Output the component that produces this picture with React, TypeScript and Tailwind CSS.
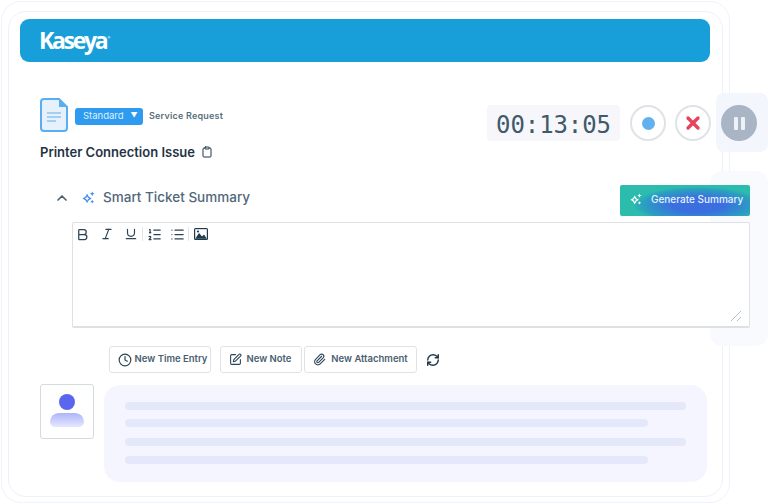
import { Bold, ChevronUp, Clipboard, Clock, Italic, List, ListOrdered, Paperclip, RefreshCw, SquarePen, Underline, X } from "lucide-react";

function Sparkle({ className }: { className: string }) {
  return (
    <svg viewBox="0 0 14 14" className={className} fill="currentColor">
      <path d="M5.5 3 7.4 6.1 10.500 8 7.400 9.900 5.500 13 3.600 9.900 0.500 8 3.600 6.100ZM5.500 5.600 4.700 7.200 3.100 8 4.700 8.800 5.500 10.400 6.300 8.800 7.900 8 6.300 7.200Z" fillRule="evenodd" />
      <path d="M11 .5 11.800 2.200 13.500 3 11.800 3.800 11 5.500 10.200 3.800 8.500 3 10.200 2.200Z" />
      <path d="M11 9.500 11.700 10.800 13 11.500 11.700 12.200 11 13.500 10.300 12.200 9 11.500 10.300 10.800Z" />
    </svg>
  );
}

function ActionButton({ icon, label, w }: { icon: React.ReactNode; label: string; w: string }) {
  return (
    <button className={`flex h-[27px] items-center justify-center gap-[3px] rounded-[3px] border border-[#dfe3e8] bg-white text-[9.5px] font-semibold text-[#4a6070] ${w}`}>
      {icon}
      {label}
    </button>
  );
}

export default function App() {
  return (
    <div className="relative h-[504px] w-[768px] overflow-hidden bg-white font-['Inter',sans-serif]">
      <div className="absolute left-[716px] top-[93px] z-[1] h-[59px] w-[52px] rounded-[8px] bg-[#f4f6fd]" />
      <div className="absolute left-[710px] top-[171px] z-[1] h-[175px] w-[58px] rounded-[12px] bg-[#f9fafd]" />

      <div className="ml-[1px] mt-[1px] h-[502px] w-[729px] rounded-[20px] border border-[#f1f2fc] pl-[6px] pt-[9px]">
        <div className="relative h-[486px] w-[715px] rounded-[18px] border border-[#eff0fb] px-[11px] pt-[7px]">
          <div className="flex h-[43px] w-[690px] items-center rounded-[9px] bg-[#189fd9] pl-[19px]">
            <span className="font-['Open_Sans',sans-serif] text-[23px] font-bold leading-none tracking-[-2.300px] text-white">Kaseya</span>
            <span className="mb-[6px] ml-[1px] text-[4px] text-white">®</span>
          </div>

          <div className="mt-[36px] flex items-start">
            <div className="ml-[20px] w-[447px] shrink-0">
              <div className="flex items-center">
                <svg viewBox="0 0 28 34" className="mb-[2px] h-[34px] w-[28px]">
                  <path d="M4 1h15l8 8v21a3 3 0 0 1-3 3H4a3 3 0 0 1-3-3V4a3 3 0 0 1 3-3Z" fill="#e6f1fc" stroke="#5aaef0" strokeWidth="2" />
                  <path d="M19 1v8h8Z" fill="#5aaef0" />
                  <path d="M7 15h14M7 19h14M7 23h9" stroke="#8dc3ee" strokeWidth="1.500" />
                </svg>
                <div className="ml-[7px] flex h-[17px] w-[68px] items-center rounded-[3px] bg-[#2e9bf0] pl-[8px] text-[9.500px] text-[#dcefff]">
                  <span>Standard</span>
                  <span className="ml-[7px] text-[7px] text-white">▼</span>
                </div>
                <span className="ml-[6px] text-[9px] font-semibold tracking-[0.200px] text-[#5a6f7c]">Service Request</span>
              </div>
              <div className="mt-[8px] flex items-center gap-[6px] text-[13px] font-semibold leading-[20px] text-[#1f3444]">
                <span>Printer Connection Issue</span>
                <Clipboard className="h-[12px] w-[12px]" strokeWidth={2} />
              </div>
            </div>

            <div className="relative z-10 mt-[7px] flex shrink-0 items-center">
              <div className="flex h-[36px] w-[133px] items-center justify-center rounded-[4px] bg-[#f7f7fb] pt-[3px] font-['DejaVu_Sans_Mono',monospace] text-[24px] tracking-[-0.100px] text-[#3f5a6b]">
                00:13:05
              </div>
              <div className="ml-[10px] flex h-[36px] w-[36px] items-center justify-center rounded-full border-[2px] border-[#dfe3e7] bg-white">
                <div className="h-[13px] w-[13px] rounded-full bg-[#62b0f0]" />
              </div>
              <div className="ml-[9px] flex h-[36px] w-[36px] items-center justify-center rounded-full border-[2px] border-[#dfe3e7] bg-white">
                <X className="h-[20px] w-[20px] text-[#e8425c]" strokeWidth={4} />
              </div>
              <div className="ml-[10px] flex h-[36px] w-[36px] items-center justify-center gap-[3px] rounded-full bg-[#a9b4c4]">
                <div className="h-[13px] w-[4px] rounded-[1px] bg-[#eef1f5]" />
                <div className="h-[13px] w-[4px] rounded-[1px] bg-[#eef1f5]" />
              </div>
            </div>
          </div>

          <div className="relative z-10 mt-[20px] flex h-[31px] items-center">
            <ChevronUp className="ml-[34px] h-[16px] w-[16px] text-[#4a6070]" strokeWidth={2.500} />
            <Sparkle className="ml-[12px] h-[13px] w-[13px] text-[#3f8df0]" />
            <span className="ml-[8px] text-[13.500px] font-medium text-[#51677a]">Smart Ticket Summary</span>
            <div className="ml-auto mr-[-39px] mt-[5px] flex h-[31px] w-[130px] items-center rounded-[2px] bg-[radial-gradient(ellipse_50%_60%_at_60%_65%,#3b6fe0_40%,#2aa0c0_85%,#2cbcae_100%)] pb-[2px] pl-[10px] text-[10px] font-medium text-[#e6f2ff]">
              <Sparkle className="h-[12px] w-[12px] text-white" />
              <span className="ml-[9px]">Generate Summary</span>
            </div>
          </div>

          <div className="relative z-10 ml-[52px] mt-[9px] h-[106px] w-[678px] rounded-[2px] border border-[#dde1e4] border-b-[2px] bg-white">
            <div className="flex h-[22px] items-center pl-[2px] text-[#2c4453]">
              <Bold className="h-[15px] w-[15px]" strokeWidth={2} />
              <Italic className="ml-[10px] h-[14px] w-[14px]" strokeWidth={2} />
              <Underline className="ml-[10px] h-[14px] w-[14px]" strokeWidth={2} />
              <div className="ml-[4px] h-[14px] w-px bg-[#e1e4e8]" />
              <ListOrdered className="ml-[4px] h-[15px] w-[15px]" strokeWidth={2} />
              <List className="ml-[8px] h-[15px] w-[15px]" strokeWidth={2} />
              <div className="ml-[3px] h-[14px] w-px bg-[#e1e4e8]" />
              <svg viewBox="0 0 14 12" className="ml-[5px] h-[12px] w-[14px]">
                <rect width="14" height="12" rx="1.500" fill="#1f3a4a" />
                <rect x="1.200" y="1.200" width="11.600" height="9.600" fill="#ffffff" />
                <path d="M1.200 10.800 5 5l3 3.500 2-2 2.800 4.300Z" fill="#1f3a4a" />
                <circle cx="4" cy="3.500" r="1.100" fill="#1f3a4a" />
              </svg>
            </div>
            <svg viewBox="0 0 12 12" className="absolute bottom-[4px] right-[7px] h-[12px] w-[12px]" stroke="#b9c0c4" strokeWidth="1">
              <path d="M1 11 11 1M7 11l4-4" />
            </svg>
          </div>

          <div className="relative z-10 ml-[89px] mt-[18px] flex items-center">
            <ActionButton w="w-[102px] pl-[5px]" label="New Time Entry" icon={<Clock className="h-[14px] w-[14px] text-[#2c4453]" strokeWidth={2} />} />
            <div className="ml-[9px]">
              <ActionButton w="w-[82px] pr-[2px]" label="New Note" icon={<SquarePen className="mr-[2px] h-[13px] w-[13px] text-[#2c4453]" strokeWidth={2} />} />
            </div>
            <div className="ml-[2px]">
              <ActionButton w="w-[113px]" label="New Attachment" icon={<Paperclip className="mr-[2px] h-[13px] w-[13px] text-[#2c4453]" strokeWidth={2} />} />
            </div>
            <RefreshCw className="ml-[9px] h-[14px] w-[14px] text-[#1f3a4a]" strokeWidth={2.500} />
          </div>

          <div className="mt-[11px] ml-[20px] flex items-start">
            <div className="flex h-[55px] w-[54px] flex-col items-center rounded-[3px] border border-[#d5dadd] bg-white pt-[9px]">
              <div className="h-[16px] w-[16px] rounded-full bg-[#5b66ee]" />
              <div className="mt-[3px] h-[14px] w-[34px] rounded-t-[10px] rounded-b-[6px] bg-[linear-gradient(#aeb4fa,#e6e8fe)]" />
            </div>
            <div className="ml-[10px] mt-[1px] flex h-[97px] w-[603px] flex-col items-start rounded-[16px] bg-[#f4f5fe] pl-[21px] pt-[17px]">
              <div className="h-[8px] w-[561px] rounded-full bg-[#e5e8fb]" />
              <div className="mt-[9px] h-[8px] w-[523px] rounded-full bg-[#e5e8fb]" />
              <div className="mt-[11px] h-[8px] w-[561px] rounded-full bg-[#e5e8fb]" />
              <div className="mt-[10px] h-[8px] w-[523px] rounded-full bg-[#e5e8fb]" />
            </div>
          </div>
        </div>
      </div>
    </div>
  );
}
